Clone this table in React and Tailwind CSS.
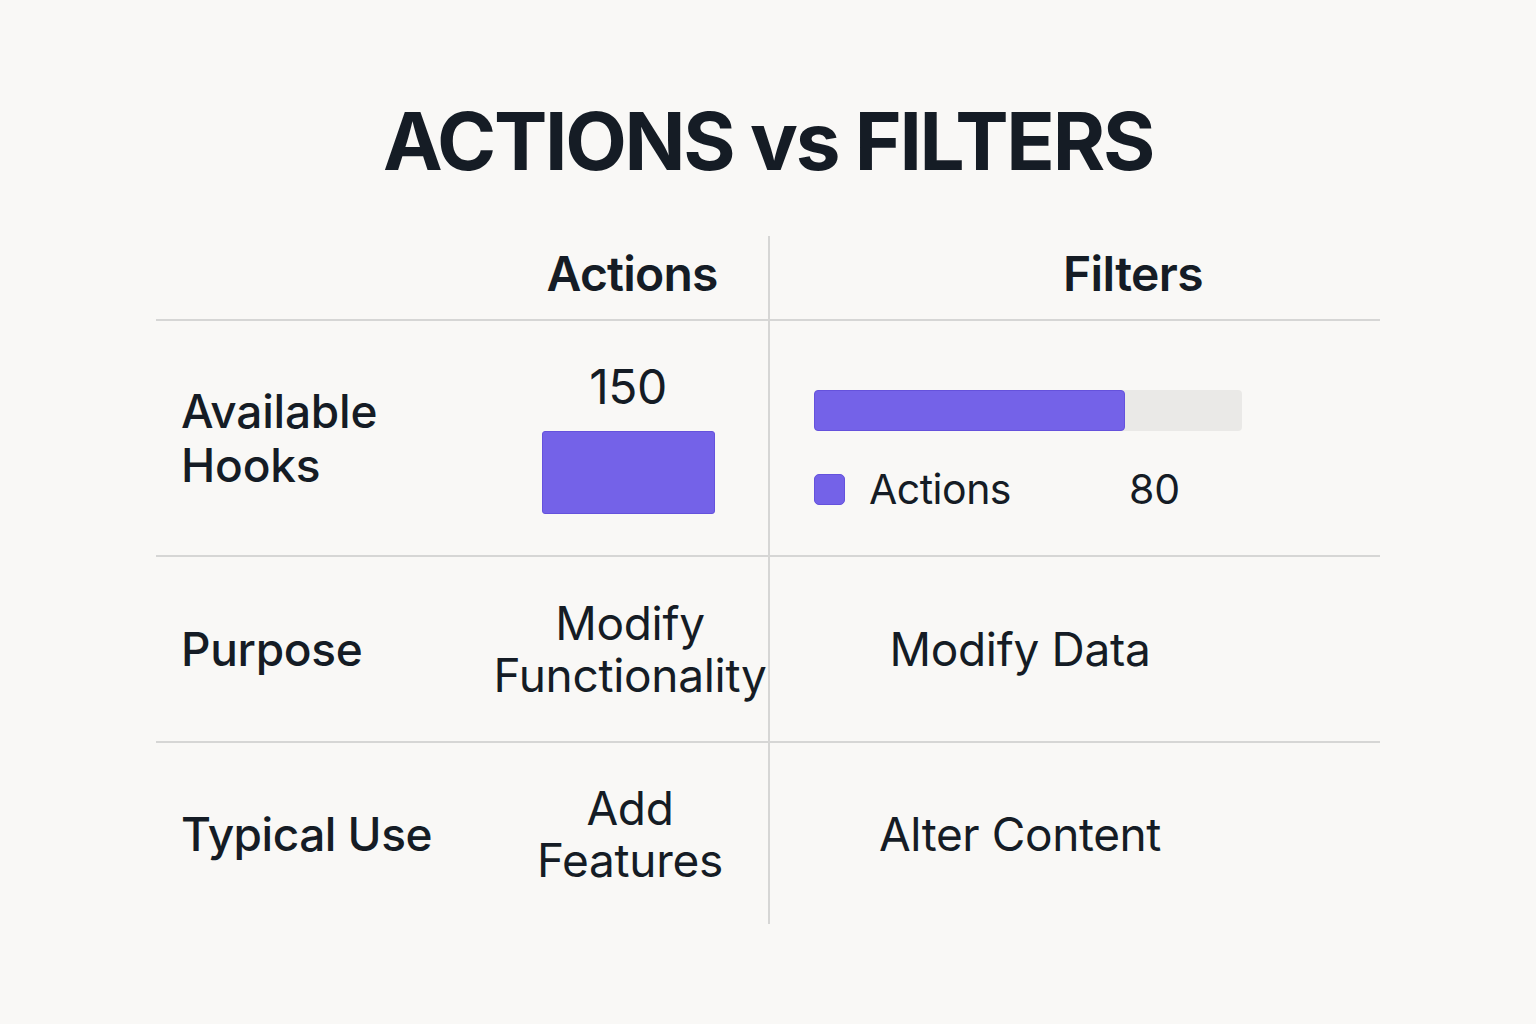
export default function App() {
  return (
    <div className="w-[1536px] h-[1024px] bg-[#f9f8f6] text-[#151c25] font-['Inter',sans-serif] overflow-hidden">
      {/* Title */}
      <h1 className="pt-[101px] text-center text-[80px] leading-none font-bold tracking-[-2.3px]">
        ACTIONS vs FILTERS
      </h1>

      {/* Comparison table */}
      <div className="mt-[55px] ml-[156px] w-[1224px] grid grid-cols-[336px_276px_612px]">
        {/* Header */}
        <div className="h-[85px] border-b-2 border-[#d6d6d5]"></div>
        <div className="h-[85px] border-b-2 border-[#d6d6d5] flex items-center justify-center pb-2 pl-1 text-[48px] leading-none font-semibold tracking-[-0.8px]">
          Actions
        </div>
        <div className="h-[85px] border-b-2 border-l-2 border-[#d6d6d5] flex items-center justify-center pl-[116px] pb-2 text-[48px] leading-none font-semibold tracking-[-0.6px]">
          Filters
        </div>

        {/* Available Hooks */}
        <div className="h-[236px] border-b-2 border-[#d6d6d5] flex items-center pl-[25px] text-[46px] leading-[54px] font-medium tracking-[-0.2px]">
          Available
          <br />
          Hooks
        </div>
        <div className="h-[236px] border-b-2 border-[#d6d6d5] flex flex-col items-center justify-center pr-1">
          <div className="text-[48px] leading-none tracking-[-0.5px]">150</div>
          <div className="mt-5 w-[173px] h-[83px] rounded-[3px] bg-[#7462e8] border border-[#6552dc]"></div>
        </div>
        <div className="h-[236px] border-b-2 border-l-2 border-[#d6d6d5] flex flex-col justify-center pl-[44px] pt-6">
          <div className="w-[428px] h-[41px] rounded-[4px] bg-[#eae9e7] flex">
            <div className="w-[311px] h-full rounded-[4px] bg-[#7462e8] border border-[#6552dc]"></div>
          </div>
          <div className="mt-[38px] flex items-center">
            <div className="w-[31px] h-[31px] rounded-[5px] bg-[#7462e8] border border-[#6552dc]"></div>
            <div className="ml-6 w-[260px] text-[41px] leading-none tracking-[-0.5px]">Actions</div>
            <div className="text-[41px] leading-none">80</div>
          </div>
        </div>

        {/* Purpose */}
        <div className="h-[186px] border-b-2 border-[#d6d6d5] flex items-center pl-[25px] text-[46px] leading-none font-medium tracking-[-0.3px]">
          Purpose
        </div>
        <div className="h-[186px] border-b-2 border-[#d6d6d5] flex items-center justify-center text-center text-[46px] leading-[52px] whitespace-nowrap tracking-[-0.3px]">
          Modify
          <br />
          Functionality
        </div>
        <div className="h-[186px] border-b-2 border-l-2 border-[#d6d6d5] flex items-center justify-center pr-[110px] text-[46px] leading-none tracking-[-0.3px]">
          Modify Data
        </div>

        {/* Typical Use */}
        <div className="h-[181px] flex items-center pl-[25px] text-[46px] leading-none font-medium tracking-[-0.5px]">
          Typical Use
        </div>
        <div className="h-[181px] flex items-center justify-center text-center text-[46px] leading-[52px] tracking-[-0.3px]">
          Add
          <br />
          Features
        </div>
        <div className="h-[181px] border-l-2 border-[#d6d6d5] flex items-center justify-center pr-[110px] text-[46px] leading-none tracking-[-0.4px]">
          Alter Content
        </div>
      </div>
    </div>
  );
}
